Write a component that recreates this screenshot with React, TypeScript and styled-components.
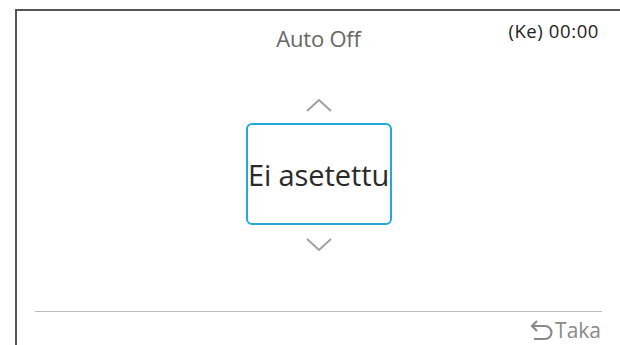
import React from 'react'
import styled, { createGlobalStyle } from 'styled-components'

const Global = createGlobalStyle`
  html, body {
    margin: 0;
    padding: 0;
    background: #fff;
    overflow: hidden;
  }
  body {
    font-family: "Open Sans", "Noto Sans", sans-serif;
  }
`

const Frame = styled.div`
  margin: 9px 0 0 15px;
  height: 336px;
  border-top: 2px solid #555;
  border-left: 2px solid #555;
  display: flex;
  flex-direction: column;
  box-sizing: border-box;
`

const Header = styled.div`
  display: grid;
  grid-template-columns: 1fr auto 1fr;
  height: 46px;
`

const Title = styled.div`
  grid-column: 2;
  padding-top: 12px;
  font-size: 22px;
  line-height: 30px;
  color: #666;
  letter-spacing: -0.2px;
`

const Clock = styled.div`
  grid-column: 3;
  justify-self: end;
  padding: 8px 21px 0 0;
  font-size: 18.5px;
  line-height: 24px;
  color: #222;
  letter-spacing: 0.6px;
`

const Picker = styled.div`
  flex: 1;
  display: flex;
  flex-direction: column;
  align-items: center;
  padding-top: 40px;
`

const Arrow = styled.svg`
  display: block;
  width: 28px;
  height: 16px;
`

const ValueBox = styled.div`
  width: 146px;
  height: 102px;
  box-sizing: border-box;
  margin: 10px 0 12px;
  border: 2px solid #22a9d9;
  border-radius: 6px;
  display: flex;
  align-items: center;
  justify-content: center;
  font-size: 29px;
  color: #2a2a2a;
  letter-spacing: -0.1px;
  white-space: nowrap;
`

const Footer = styled.div`
  margin: 0 18px 0 18px;
  border-top: 1.5px solid #bcbcbc;
  height: 34px;
  display: flex;
  justify-content: flex-end;
  align-items: flex-start;
  box-sizing: border-box;
`

const BackButton = styled.div`
  display: flex;
  align-items: center;
  gap: 2px;
  padding-top: 6px;
  margin-right: 1px;
  font-size: 21px;
  line-height: 24px;
  color: #8a8a8a;
`

export default function App() {
  return (
    <>
      <Global />
      <Frame>
        <Header>
          <Title>Auto Off</Title>
          <Clock>(Ke) 00:00</Clock>
        </Header>
        <Picker>
          <Arrow viewBox="0 0 28 16">
            <polyline points="2,14 14,3 26,14" fill="none" stroke="#a0a0a0" strokeWidth="2" />
          </Arrow>
          <ValueBox>Ei asetettu</ValueBox>
          <Arrow viewBox="0 0 28 16">
            <polyline points="2,2 14,13 26,2" fill="none" stroke="#a0a0a0" strokeWidth="2" />
          </Arrow>
        </Picker>
        <Footer>
          <BackButton>
            <svg width="24" height="22" viewBox="0 0 24 22">
              <path d="M8 2 L3 7 L8 12" fill="none" stroke="#8a8a8a" strokeWidth="2.2" />
              <path d="M3 7 H16 a6.5 6.5 0 0 1 0 13 H5" fill="none" stroke="#8a8a8a" strokeWidth="2.2" />
            </svg>
            Taka
          </BackButton>
        </Footer>
      </Frame>
    </>
  )
}
